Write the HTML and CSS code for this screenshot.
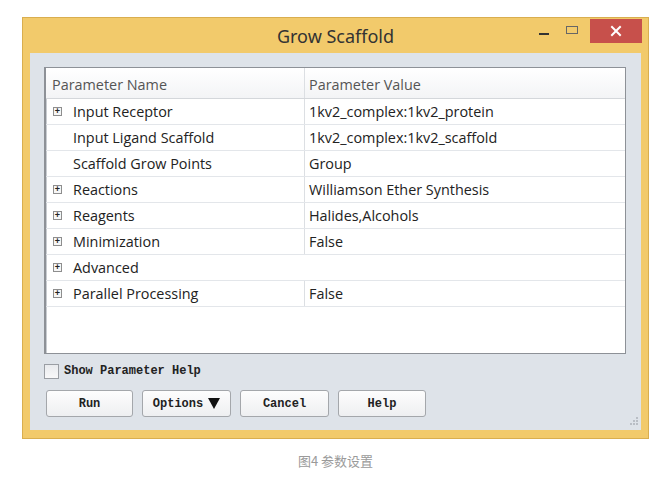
FILE: index.html
```html
<!DOCTYPE html>
<html>
<head>
<meta charset="utf-8">
<link rel="stylesheet" href="styles.css">
</head>
<body>
<div class="page">
  <div class="window">
    <div class="titlebar">
      <div class="title">Grow Scaffold</div>
      <div class="controls">
        <div class="ctl ctl-min"><span class="min-bar"></span></div>
        <div class="ctl ctl-max"><span class="max-box"></span></div>
        <div class="ctl ctl-close">
          <svg width="12" height="12" viewBox="0 0 12 12"><path d="M2 2 L10 10 M10 2 L2 10" stroke="#fff" stroke-width="2" stroke-linecap="square"/></svg>
        </div>
      </div>
    </div>
    <div class="client">
      <div class="grid">
        <div class="row head">
          <div class="cell name">Parameter Name</div>
          <div class="cell value">Parameter Value</div>
        </div>
        <div class="row">
          <div class="cell name"><span class="exp">+</span>Input Receptor</div>
          <div class="cell value">1kv2_complex:1kv2_protein</div>
        </div>
        <div class="row">
          <div class="cell name"><span class="exp none"></span>Input Ligand Scaffold</div>
          <div class="cell value">1kv2_complex:1kv2_scaffold</div>
        </div>
        <div class="row">
          <div class="cell name"><span class="exp none"></span>Scaffold Grow Points</div>
          <div class="cell value">Group</div>
        </div>
        <div class="row">
          <div class="cell name"><span class="exp">+</span>Reactions</div>
          <div class="cell value">Williamson Ether Synthesis</div>
        </div>
        <div class="row">
          <div class="cell name"><span class="exp">+</span>Reagents</div>
          <div class="cell value">Halides,Alcohols</div>
        </div>
        <div class="row">
          <div class="cell name"><span class="exp">+</span>Minimization</div>
          <div class="cell value">False</div>
        </div>
        <div class="row span">
          <div class="cell name"><span class="exp">+</span>Advanced</div>
        </div>
        <div class="row">
          <div class="cell name"><span class="exp">+</span>Parallel Processing</div>
          <div class="cell value">False</div>
        </div>
      </div>
      <label class="check"><span class="box"></span>Show Parameter Help</label>
      <div class="buttons">
        <div class="btn w87">Run</div>
        <div class="btn w89">Options <span class="tri"></span></div>
        <div class="btn w89">Cancel</div>
        <div class="btn w88">Help</div>
      </div>
      <div class="grip">
        <svg width="12" height="12" viewBox="0 0 12 12" fill="#b9bec5">
          <rect x="9" y="1" width="2" height="2"/>
          <rect x="6" y="4" width="2" height="2"/><rect x="9" y="4" width="2" height="2"/>
          <rect x="3" y="7" width="2" height="2"/><rect x="6" y="7" width="2" height="2"/><rect x="9" y="7" width="2" height="2"/>
        </svg>
      </div>
    </div>
  </div>
  <div class="caption">图4 参数设置</div>
</div>
</body>
</html>
```
FILE: styles.css
```css
html, body {
  margin: 0;
  padding: 0;
  background: #ffffff;
}
.page {
  padding: 17px 0 0 22px;
  width: 627px;
}
.window {
  width: 625px;
  height: 420px;
  border: 1px solid #d9ae4f;
  background: #f2ca6b;
  display: flex;
  flex-direction: column;
  padding: 0;
}
.titlebar {
  height: 35px;
  position: relative;
  display: flex;
  align-items: center;
  justify-content: center;
}
.title {
  font-family: "Noto Sans", "Open Sans", sans-serif;
  font-size: 18px;
  color: #333333;
  margin-top: 0;
}
.controls {
  position: absolute;
  right: 6px;
  top: 1px;
  display: flex;
  align-items: flex-start;
}
.ctl {
  height: 24px;
  display: flex;
  align-items: center;
  justify-content: center;
}
.ctl-min { width: 28px; }
.min-bar {
  width: 10px;
  height: 2px;
  background: #333;
  margin-top: 6px;
}
.ctl-max { width: 28px; margin-right: 4px; }
.max-box {
  width: 10px;
  height: 6px;
  border: 1px solid #666;
  margin-top: -2px;
}
.ctl-close {
  width: 52px;
  background: #c7504b;
}
.client {
  flex: 1;
  margin: 0 7px 8px 7px;
  background: #dee3e9;
  padding: 14px 15px 0 14px;
  position: relative;
  display: flex;
  flex-direction: column;
}
.grid {
  height: 285px;
  background: #ffffff;
  border: 1px solid #8d9197;
  border-left: 2px solid #8d9197;
  box-shadow: inset 1px 1px 0 #c8ccd1;
  font-family: "Open Sans", "Noto Sans", sans-serif;
  font-size: 14.4px;
  color: #222;
}
.row {
  display: flex;
  height: 26px;
  border-bottom: 1px solid #e3e6ea;
  box-sizing: border-box;
}
.row.head {
  height: 31px;
  background: linear-gradient(#ffffff, #f3f4f6);
  border-bottom: 1px solid #d4d7db;
  color: #555;
}
.cell {
  display: flex;
  align-items: center;
  white-space: nowrap;
}
.cell.name {
  width: 252px;
  padding-left: 6px;
  border-right: 1px solid #dcdfe3;
}
.head .cell.name, .head .cell.value { padding-top: 2px; }
.cell.value {
  flex: 1;
  padding-left: 4px;
}
.row.span .cell.name {
  border-right: none;
  flex: 1;
}
.exp {
  width: 7px;
  height: 7px;
  border: 1px solid #8e8e8e;
  font-family: "Liberation Sans", sans-serif;
  font-size: 9px;
  line-height: 7px;
  text-align: center;
  color: #222;
  font-weight: bold;
  margin-right: 11px;
  margin-left: 1px;
  background: #f6f6f6;
}
.exp.none {
  border-color: transparent;
  background: transparent;
}
.check {
  display: flex;
  align-items: center;
  margin-top: 9px;
  margin-left: 0;
  font-family: "Liberation Mono", monospace;
  font-size: 12px;
  font-weight: bold;
  color: #222;
  height: 16px;
}
.box {
  width: 13px;
  height: 13px;
  border: 1px solid #9a9ea4;
  background: linear-gradient(#e9ebee, #f8f8f9);
  margin-right: 5px;
}
.buttons {
  display: flex;
  gap: 9px;
  margin-top: 11px;
  margin-left: 2px;
}
.btn {
  border: 1px solid #a4a7ab;
  border-radius: 3px;
  background: linear-gradient(#fdfdfd, #eeeff1);
  display: flex;
  align-items: center;
  justify-content: center;
  font-family: "Liberation Mono", monospace;
  font-size: 12px;
  font-weight: bold;
  color: #222;
  box-sizing: border-box;
  height: 27px;
}
.w87 { width: 87px; }
.w89 { width: 89px; }
.w88 { width: 88px; }
.tri {
  width: 0;
  height: 0;
  border-left: 6px solid transparent;
  border-right: 6px solid transparent;
  border-top: 11px solid #111;
  margin-left: 5px;
}
.grip {
  position: absolute;
  right: 2px;
  bottom: 2px;
  line-height: 0;
}
.caption {
  text-align: center;
  font-family: "Noto Sans CJK SC", sans-serif;
  font-size: 13px;
  color: #9a9a9a;
  margin-top: 12px;
}
```
